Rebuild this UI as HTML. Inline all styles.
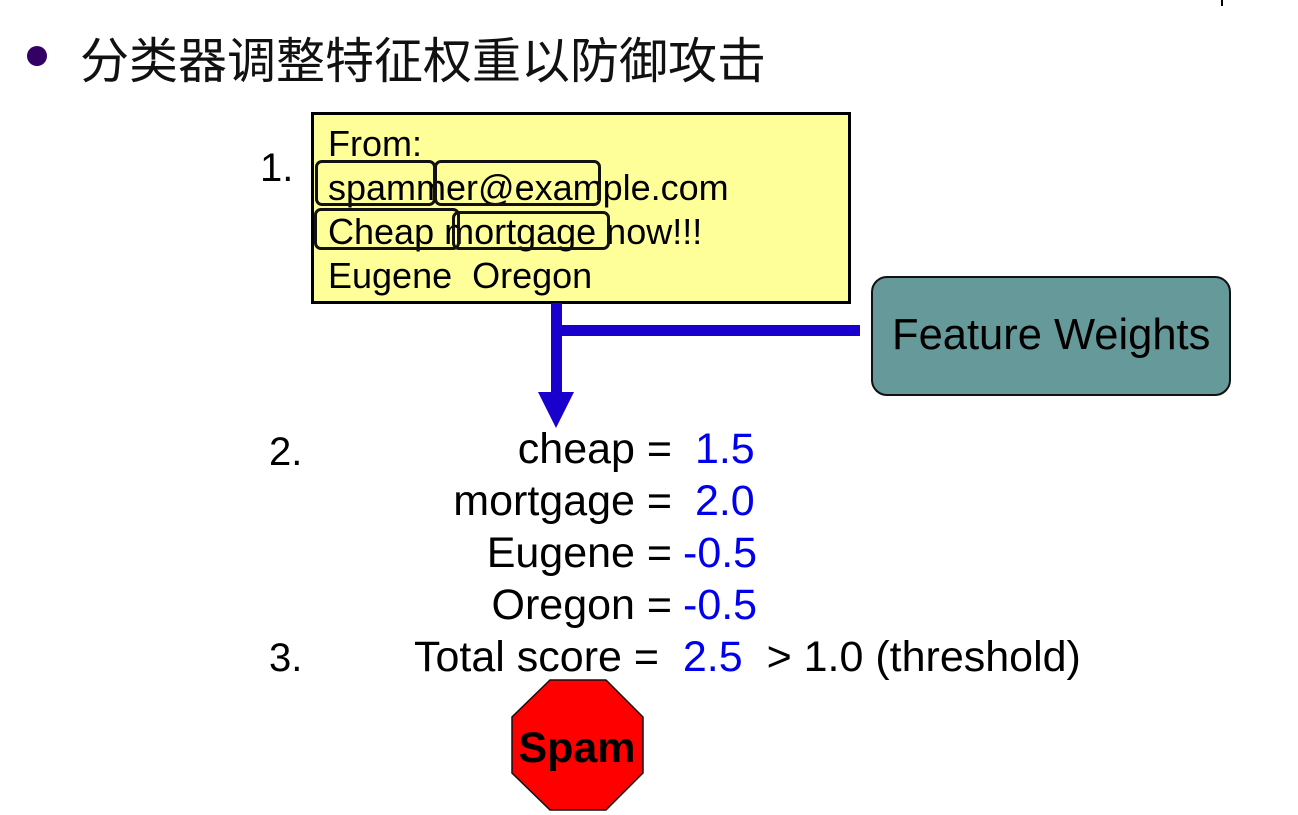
<!DOCTYPE html>
<html><head><meta charset="utf-8"><style>
body{margin:0;width:1298px;height:815px;background:#fff;position:relative;overflow:hidden;font-family:"Liberation Sans","Noto Sans CJK SC",sans-serif;}
.a{position:absolute;white-space:nowrap;}
.hl{position:absolute;border:3px solid #111;border-radius:7px;box-sizing:border-box;}
.b{color:#0000ee}
</style></head><body>
<div class="a" style="left:1221px;top:0;width:2px;height:6px;background:#000"></div>
<div class="a" style="left:27px;top:46px;width:20px;height:20px;border-radius:50%;background:#330066"></div>
<div class="a" style="left:80px;top:22px;font-size:49px;color:#111">分类器调整特征权重以防御攻击</div>

<div class="a" style="left:311px;top:112px;width:540px;height:192px;background:#ffff99;border:3px solid #000;box-sizing:border-box"></div>
<div class="a" style="left:328px;top:122px;font-size:36px;line-height:44px;color:#000">From:<br>spammer@example.com<br>Cheap mortgage now!!!<br>Eugene&nbsp; Oregon</div>
<div class="hl" style="left:315px;top:160px;width:121px;height:46px"></div>
<div class="hl" style="left:434px;top:160px;width:167px;height:46px"></div>
<div class="hl" style="left:314px;top:208px;width:146px;height:42px"></div>
<div class="hl" style="left:452px;top:211px;width:158px;height:39px"></div>
<div class="a" style="left:260px;top:146px;font-size:40px">1.</div>

<div class="a" style="left:551px;top:303px;width:11px;height:94px;background:#1a00cc"></div>
<div class="a" style="left:561px;top:325px;width:299px;height:11px;background:#1a00cc"></div>
<svg class="a" style="left:536px;top:392px" width="40" height="40"><polygon points="2,0 38,0 20,36" fill="#1a00cc"/></svg>

<div class="a" style="left:871px;top:276px;width:360px;height:120px;background:#669999;border:2px solid #111;border-radius:16px;box-sizing:border-box"></div>
<div class="a" style="left:892px;top:311px;font-size:43.5px;color:#000">Feature Weights</div>

<div class="a" style="left:269px;top:430px;font-size:40px">2.</div>
<div class="a" style="left:269px;top:636px;font-size:40px">3.</div>
<div class="a" style="left:300px;top:423px;width:372px;text-align:right;font-size:43px;line-height:52px">cheap =<br>mortgage =<br>Eugene =<br>Oregon =</div>
<div class="a b" style="left:683px;top:423px;font-size:43px;line-height:52px">&nbsp;1.5<br>&nbsp;2.0<br>-0.5<br>-0.5</div>
<div class="a" style="left:414px;top:633px;font-size:43px">Total score = &nbsp;<span class="b">2.5</span>&nbsp; &gt; 1.0 (threshold)</div>

<svg class="a" style="left:505px;top:676px" width="145" height="139">
<circle cx="70" cy="70" r="62" fill="#22aa22"/>
<polygon points="45,4 101,4 138,41 138,97 101,134 45,134 7,97 7,41" fill="#ff0000" stroke="#111" stroke-width="1.5"/>
<text x="72" y="86" text-anchor="middle" font-family="Liberation Sans" font-weight="bold" font-size="43">Spam</text>
</svg>
</body></html>
